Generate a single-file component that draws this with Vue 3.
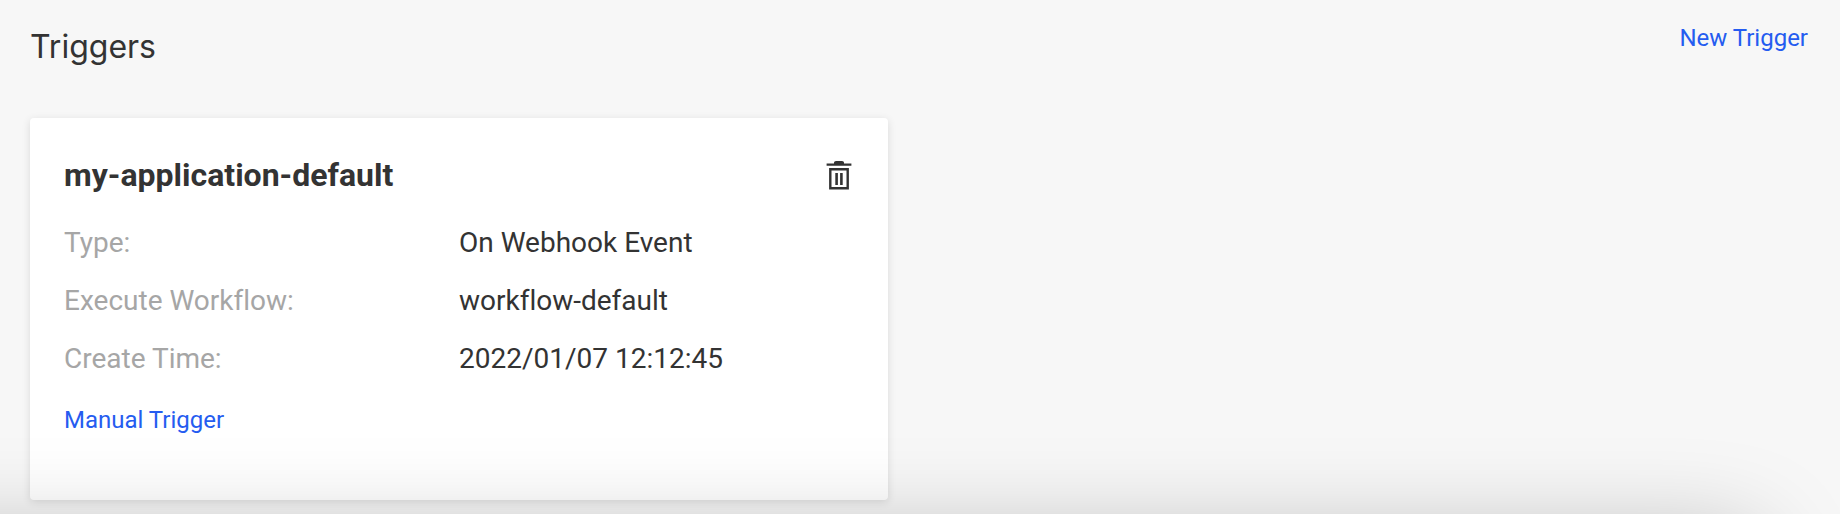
<script setup>
const trigger = {
  name: 'my-application-default',
  fields: [
    { label: 'Type:', value: 'On Webhook Event' },
    { label: 'Execute Workflow:', value: 'workflow-default' },
    { label: 'Create Time:', value: '2022/01/07 12:12:45' },
  ],
}
</script>

<template>
  <main class="page">
    <header class="page-header">
      <h1 class="page-title">Triggers</h1>
      <a class="link" href="#new">New Trigger</a>
    </header>
    <section class="grid">
      <article class="card">
        <div class="card-header">
          <h2 class="card-title">{{ trigger.name }}</h2>
          <button class="icon-button" type="button" aria-label="Delete trigger">
            <svg viewBox="0 0 28 32" width="28" height="32" aria-hidden="true">
              <path d="M8 4.4V3.6Q8 2 10 2H16Q18 2 18 3.6V4.4H25.4V6.8H.6V4.4Z" fill="#333" />
              <path d="M4.3 10.2H21.7V29.3H4.3Z" fill="none" stroke="#333" stroke-width="2.4" />
              <path d="M10.6 14V26M15.4 14V26" stroke="#333" stroke-width="2.6" />
            </svg>
          </button>
        </div>
        <dl class="fields">
          <div v-for="field in trigger.fields" :key="field.label" class="field">
            <dt>{{ field.label }}</dt>
            <dd>{{ field.value }}</dd>
          </div>
        </dl>
        <a class="link" href="#run">Manual Trigger</a>
      </article>
    </section>
    <div class="drawer-shadow" aria-hidden="true"></div>
  </main>
</template>

<style>
body {
  margin: 0;
  background: #f7f7f7;
}
</style>

<style scoped>
.page {
  position: relative;
  box-sizing: border-box;
  min-height: 100vh;
  padding: 22px 30px 14px;
  overflow: hidden;
  background: #f7f7f7;
  color: #333;
  font-family: Roboto, sans-serif;
  font-size: 28px;
  font-variant-ligatures: none;
  line-height: 34px;
}
.page-header {
  display: flex;
  justify-content: space-between;
  align-items: flex-start;
  margin-bottom: 46px;
  padding-right: 2px;
}
.page-title {
  margin: 0;
  font-family: Inter, sans-serif;
  font-size: 32px;
  font-weight: 400;
  line-height: 50px;
}
.link {
  color: #255cf0;
  font-size: 24px;
  line-height: 32px;
  text-decoration: none;
}
.grid {
  display: grid;
  grid-template-columns: repeat(2, minmax(0, 1fr));
  gap: 64px;
}
.card {
  padding: 36px 34px 64px;
  border-radius: 4px;
  background: #fff;
  box-shadow: 0 2px 8px rgba(0, 0, 0, 0.12);
}
.card-header {
  display: flex;
  justify-content: space-between;
  align-items: center;
  margin-bottom: 18px;
}
.card-title {
  margin: 0;
  font-size: 32px;
  font-weight: 700;
  line-height: 42px;
}
.icon-button {
  display: flex;
  padding: 0;
  border: 0;
  background: none;
  cursor: pointer;
}
.fields {
  margin: 0 0 14px;
}
.field {
  display: grid;
  grid-template-columns: 1fr 1fr;
  padding: 12px 0;
}
dt {
  color: #a6a6a6;
}
dd {
  margin: 0;
}
.drawer-shadow {
  position: absolute;
  left: -200px;
  right: 80px;
  top: 100%;
  height: 400px;
  margin-top: 24px;
  border-radius: 20px;
  box-shadow: 0 0 96px rgba(0, 0, 0, 0.27);
  pointer-events: none;
}
</style>
